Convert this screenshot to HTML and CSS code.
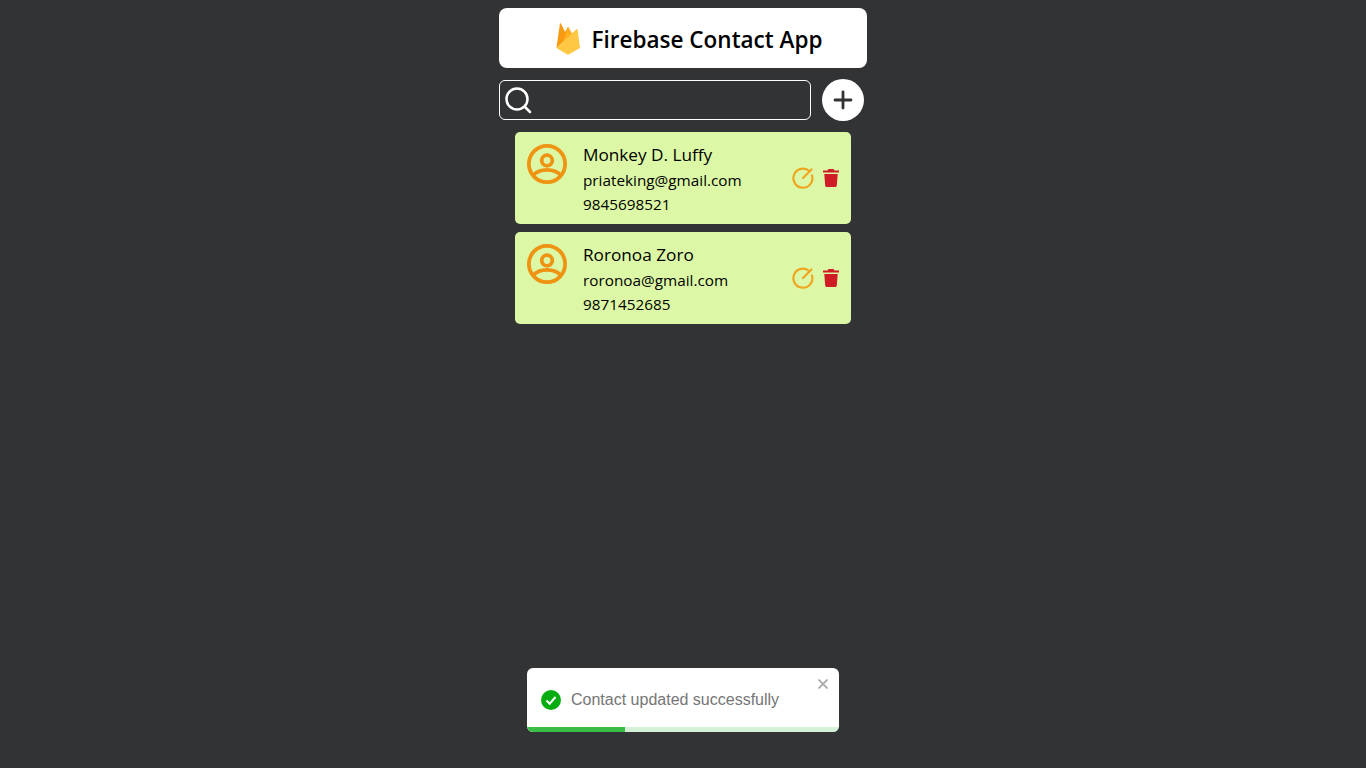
FILE: index.html
```html
<!DOCTYPE html>
<html lang="en">
<head>
    <meta charset="UTF-8">
    <meta name="viewport" content="width=device-width, initial-scale=1.0">
    <title>Firebase Contact App</title>
    <link rel="stylesheet" href="styles.css">
</head>
<body>
    <div class="container">
        <div class="navbar">
            <svg class="logo" viewBox="0 0 24 32" width="24" height="32">
                <path d="M0.400 25 3.900 0.900C4 0.200 4.800 0 5.100 0.700L9 9 12 3.800 16 11 0.400 25z" fill="#f79a12"/>
                <path d="M12 3.800 16.500 11.500 7 18z" fill="#ffae1f"/>
                <path d="M20.300 6.300C20.500 5.600 21.300 5.600 21.500 6.300L24 25 13.100 31.200C12.400 31.600 11.600 31.600 10.900 31.200L0.400 25z" fill="#ffc844"/>
            </svg>
            <h1>Firebase Contact App</h1>
        </div>

        <div class="search-row">
            <div class="search">
                <svg viewBox="0 0 28 28" width="28" height="28" fill="none" stroke="#fff" stroke-width="2.500" stroke-linecap="round">
                    <circle cx="13" cy="13" r="10.500"/>
                    <path d="M21 21l5 5"/>
                </svg>
                <input type="text">
            </div>
            <button class="add-btn">
                <svg viewBox="0 0 20 20" width="20" height="20" fill="none" stroke="#323334" stroke-width="2.800" stroke-linecap="round">
                    <path d="M10 2v16M2 10h16"/>
                </svg>
            </button>
        </div>

        <div class="contacts">
            <div class="card">
                <svg class="avatar" viewBox="0 0 40 40" width="40" height="40" fill="none" stroke="#ee9312" stroke-width="3.800">
                    <circle cx="20" cy="20" r="18.100"/>
                    <circle cx="20" cy="16.500" r="5.300"/>
                    <path d="M6 31.500C10 27 15 25.800 20 25.800S30 27 34 31.500"/>
                </svg>
                <div class="info">
                    <div class="name">Monkey D. Luffy</div>
                    <div class="detail">priateking@gmail.com</div>
                    <div class="detail">9845698521</div>
                </div>
                <div class="actions">
                    <svg viewBox="0 0 22 22" width="22" height="22" fill="none" stroke="#f0a520" stroke-width="2.200" stroke-linecap="round">
                        <path d="M17.500 4.400A9.500 9.500 0 1 0 20 8.500"/>
                        <path d="M11 11 19.500 2.500"/>
                    </svg>
                    <svg viewBox="0 0 16 18" width="16" height="18" fill="#d01c24">
                        <path d="M5.500 0h5l1 1.500H16v2H0v-2h4.500zM1.300 5h13.400l-.9 11.500c-.1.900-.8 1.500-1.600 1.500H3.800c-.8 0-1.500-.6-1.600-1.500z"/>
                    </svg>
                </div>
            </div>
            <div class="card">
                <svg class="avatar" viewBox="0 0 40 40" width="40" height="40" fill="none" stroke="#ee9312" stroke-width="3.800">
                    <circle cx="20" cy="20" r="18.100"/>
                    <circle cx="20" cy="16.500" r="5.300"/>
                    <path d="M6 31.500C10 27 15 25.800 20 25.800S30 27 34 31.500"/>
                </svg>
                <div class="info">
                    <div class="name">Roronoa Zoro</div>
                    <div class="detail">roronoa@gmail.com</div>
                    <div class="detail">9871452685</div>
                </div>
                <div class="actions">
                    <svg viewBox="0 0 22 22" width="22" height="22" fill="none" stroke="#f0a520" stroke-width="2.200" stroke-linecap="round">
                        <path d="M17.500 4.400A9.500 9.500 0 1 0 20 8.500"/>
                        <path d="M11 11 19.500 2.500"/>
                    </svg>
                    <svg viewBox="0 0 16 18" width="16" height="18" fill="#d01c24">
                        <path d="M5.500 0h5l1 1.500H16v2H0v-2h4.500zM1.300 5h13.400l-.9 11.500c-.1.900-.8 1.500-1.600 1.500H3.800c-.8 0-1.500-.6-1.600-1.500z"/>
                    </svg>
                </div>
            </div>
        </div>
    </div>

    <div class="toast">
        <svg class="toast-icon" viewBox="0 0 20 20" width="20" height="20">
            <circle cx="10" cy="10" r="10" fill="#07ad10"/>
            <path d="M5.500 10.500 8.700 13.700 14.500 7" fill="none" stroke="#fff" stroke-width="2"/>
        </svg>
        <span class="toast-text">Contact updated successfully</span>
        <svg class="toast-close" viewBox="0 0 10 10" width="10" height="10" fill="none" stroke="#a9a9a9" stroke-width="1.800">
            <path d="M0.500 0.500l9 9M9.500 0.500l-9 9"/>
        </svg>
        <div class="toast-track"><div class="toast-bar"></div></div>
    </div>
</body>
</html>
```

FILE: styles.css
```css
body {
    font-family: "Open Sans", "Noto Sans", sans-serif;
    margin: 0;
    background-color: #323334;
}
.container {
    width: 368px;
    margin: 0 auto;
    padding-top: 8px;
}
.navbar {
    height: 60px;
    box-sizing: border-box;
    padding-left: 12px;
    background: white;
    border-radius: 8px;
    display: flex;
    align-items: center;
    justify-content: center;
    gap: 12px;
}
.logo {
    flex-shrink: 0;
    margin-top: 2px;
}
.navbar h1 {
    margin: 2px 0 0;
    font-size: 22.500px;
    font-weight: 600;
    color: #000;
}
.search-row {
    display: flex;
    align-items: center;
    margin-top: 11px;
    gap: 11px;
    height: 42px;
}
.search {
    width: 312px;
    height: 40px;
    box-sizing: border-box;
    border: 1px solid white;
    border-radius: 6px;
    display: flex;
    align-items: center;
    padding-left: 4px;
    gap: 5px;
}
.search input {
    flex: 1;
    min-width: 0;
    background: transparent;
    border: none;
    outline: none;
    color: white;
}
.add-btn {
    width: 42px;
    height: 42px;
    border: none;
    border-radius: 50%;
    background: white;
    padding: 0;
    display: flex;
    align-items: center;
    justify-content: center;
    cursor: pointer;
}
.contacts {
    display: flex;
    flex-direction: column;
    gap: 8px;
    margin: 11px 16px 0;
}
.card {
    height: 92px;
    box-sizing: border-box;
    background: #dcf8a6;
    border-radius: 5px;
    display: flex;
    padding: 12px;
}
.avatar {
    flex-shrink: 0;
}
.info {
    flex: 1;
    margin-left: 16px;
    margin-top: -3px;
    color: #000;
}
.name {
    font-size: 17.200px;
    line-height: 27px;
}
.detail {
    font-size: 15.300px;
    line-height: 24px;
}
.actions {
    display: flex;
    align-items: center;
    gap: 9px;
}
.toast {
    position: fixed;
    left: 527px;
    top: 668px;
    width: 312px;
    height: 64px;
    box-sizing: border-box;
    background: white;
    border-radius: 6px;
    overflow: hidden;
    display: flex;
    align-items: center;
    padding-left: 14px;
    font-family: "Liberation Sans", Arial, sans-serif;
}
.toast-icon {
    flex-shrink: 0;
    margin-right: 10px;
}
.toast-text {
    font-size: 16px;
    color: #757575;
}
.toast-close {
    position: absolute;
    top: 11px;
    right: 11px;
}
.toast-track {
    position: absolute;
    left: 0;
    right: 0;
    bottom: 0;
    height: 5px;
    background: #d4f0d6;
}
.toast-bar {
    width: 98px;
    height: 100%;
    background: #38bd47;
}
```
